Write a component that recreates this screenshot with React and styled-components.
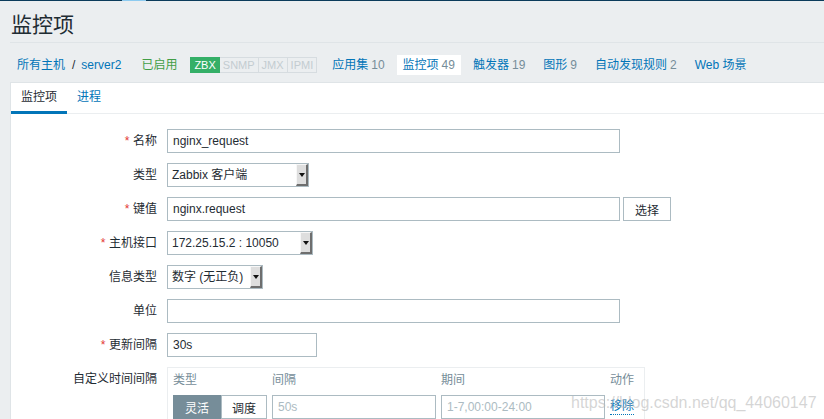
import React from 'react';
import styled, { createGlobalStyle } from 'styled-components';

const GlobalStyle = createGlobalStyle`
  html, body {
    margin: 0;
    padding: 0;
  }
  body {
    background: #ebeef0;
    color: #1f2c33;
    font-family: 'Liberation Sans', Arial, 'Noto Sans CJK SC', sans-serif;
    font-size: 12px;
    overflow: hidden;
  }
`;

const Page = styled.div`
  width: 1100px;
  position: relative;
`;

const TopStrip = styled.div`
  height: 1px;
  background: #0a3b5b;
  padding-left: 122px;
  span {
    display: block;
    width: 24px;
    height: 1px;
    background: #8dcbf0;
  }
`;

const Header = styled.header`
  margin: 0 10px;
  height: 42px;
  box-sizing: border-box;
  border-bottom: 1px solid #dfe4e7;
  display: flex;
  align-items: center;
  padding: 3px 0 0 1px;
  h1 {
    margin: 0;
    font-size: 21px;
    font-weight: normal;
    color: #1f2c33;
  }
`;

const Nav = styled.nav`
  margin: 0 10px;
  height: 39px;
  box-sizing: border-box;
  padding-top: 12px;
  display: flex;
  align-items: flex-start;
  line-height: 20px;
`;

const Crumb = styled.a`
  color: #0275b8;
  text-decoration: none;
  margin-left: ${(p) => p.$ml || 0}px;
`;

const Sep = styled.span`
  margin: 0 6px 0 7px;
  color: #1f2c33;
`;

const Status = styled.span`
  color: #429e47;
  margin-left: 20px;
`;

const Avail = styled.div`
  display: flex;
  margin: 2px 0 0 13px;
`;

const AvailBox = styled.span`
  display: block;
  height: 16px;
  line-height: 14px;
  box-sizing: border-box;
  padding: 0 3px;
  font-size: 11px;
  border: 1px solid ${(p) => (p.$on ? '#34af67' : '#d6dce0')};
  background: ${(p) => (p.$on ? '#34af67' : 'transparent')};
  color: ${(p) => (p.$on ? '#ffffff' : '#c3ccd1')};
  & + & {
    border-left: ${(p) => (p.$on ? '1px solid #34af67' : '0')};
  }
`;

const NavTab = styled.a`
  color: #0275b8;
  text-decoration: none;
  padding: 0 6px;
  margin-left: ${(p) => p.$ml || 0}px;
  margin-right: 6px;
  background: ${(p) => (p.$active ? '#ffffff' : 'transparent')};
  white-space: nowrap;
`;

const Count = styled.span`
  color: #768d99;
  margin-left: 3px;
`;

const Panel = styled.section`
  margin: 0 10px;
  background: #ffffff;
  border: 1px solid #dfe4e7;
  min-height: 400px;
`;

const TabBar = styled.div`
  display: flex;
  border-bottom: 1px solid #ebeef0;
`;

const Tab = styled.a`
  display: block;
  padding: 0 10px;
  line-height: 28px;
  height: 31px;
  box-sizing: border-box;
  margin-bottom: -1px;
  border-bottom: 3px solid ${(p) => (p.$active ? '#0275b8' : 'transparent')};
  color: ${(p) => (p.$active ? '#1f2c33' : '#0275b8')};
  text-decoration: none;
`;

const Form = styled.div`
  padding-top: 10px;
`;

const Row = styled.div`
  display: grid;
  grid-template-columns: 146px 1fr;
  column-gap: 10px;
  padding: 5px 0;
  align-items: start;
`;

const Label = styled.label`
  text-align: right;
  line-height: 24px;
  white-space: nowrap;
`;

const Req = styled.span`
  color: #e33734;
  margin-right: 0.3em;
`;

const Controls = styled.div`
  display: flex;
  align-items: center;
`;

const TextInput = styled.input`
  width: ${(p) => p.$w}px;
  height: 24px;
  box-sizing: border-box;
  border: 1px solid #acbbc2;
  padding: 0 5px;
  font: inherit;
  color: #1f2c33;
  background: #ffffff;
  outline: none;
  &::placeholder {
    color: #acbbc2;
  }
`;

const SelectBox = styled.div`
  width: ${(p) => p.$w}px;
  height: 24px;
  box-sizing: border-box;
  border: 1px solid #acbbc2;
  background: #ffffff;
  display: flex;
  align-items: stretch;
  span {
    flex: 1;
    line-height: 22px;
    padding-left: 4px;
    white-space: nowrap;
  }
`;

const Arrow = styled.i`
  display: flex;
  align-items: center;
  justify-content: center;
  width: 12px;
  box-sizing: border-box;
  background: #dedede;
  border-style: solid;
  border-width: 1px 2px 2px 1px;
  border-color: #f7f7f7 #6e6e6e #6e6e6e #f7f7f7;
  &::after {
    content: '';
    border-left: 3px solid transparent;
    border-right: 3px solid transparent;
    border-top: 4px solid #111111;
    margin-top: 1px;
  }
`;

const Button = styled.button`
  margin-left: 3px;
  height: 24px;
  box-sizing: border-box;
  padding: 0 11px;
  border: 1px solid #acbbc2;
  background: #ffffff;
  font: inherit;
  color: #1f2c33;
`;

const Intervals = styled.div`
  border: 1px solid #ebeef0;
  padding: 3px 10px 0 5px;
  display: grid;
  grid-template-columns: 94px 164px 164px auto;
  column-gap: 5px;
  row-gap: 6px;
  width: max-content;
`;

const ColHead = styled.div`
  color: #768d99;
  line-height: 18px;
`;

const Segmented = styled.div`
  display: flex;
`;

const SegButton = styled.button`
  width: ${(p) => p.$w}px;
  height: 24px;
  box-sizing: border-box;
  font: inherit;
  padding: 0;
  border: 1px solid ${(p) => (p.$active ? '#768d99' : '#acbbc2')};
  background: ${(p) => (p.$active ? '#768d99' : '#ffffff')};
  color: ${(p) => (p.$active ? '#ffffff' : '#1f2c33')};
`;

const RemoveLink = styled.a`
  align-self: center;
  justify-self: start;
  color: #0275b8;
  text-decoration: none;
  border-bottom: 1px dotted #0275b8;
  line-height: 15px;
`;

const Watermark = styled.div`
  position: absolute;
  left: 571px;
  top: 394px;
  font-size: 16px;
  line-height: 18px;
  color: rgba(185, 185, 185, 0.6);
  pointer-events: none;
  white-space: nowrap;
`;

const Select = ({ w, children }) => (
  <SelectBox $w={w}>
    <span>{children}</span>
    <Arrow />
  </SelectBox>
);

const App = () => (
  <Page>
    <GlobalStyle />
    <TopStrip><span /></TopStrip>
    <Header>
      <h1>监控项</h1>
    </Header>
    <Nav>
      <Crumb $ml={7}>所有主机</Crumb>
      <Sep>/</Sep>
      <Crumb>server2</Crumb>
      <Status>已启用</Status>
      <Avail>
        <AvailBox $on>ZBX</AvailBox>
        <AvailBox>SNMP</AvailBox>
        <AvailBox>JMX</AvailBox>
        <AvailBox>IPMI</AvailBox>
      </Avail>
      <NavTab $ml={9}>应用集<Count>10</Count></NavTab>
      <NavTab $active>监控项<Count>49</Count></NavTab>
      <NavTab>触发器<Count>19</Count></NavTab>
      <NavTab>图形<Count>9</Count></NavTab>
      <NavTab>自动发现规则<Count>2</Count></NavTab>
      <NavTab>Web 场景</NavTab>
    </Nav>

    <Panel>
      <TabBar>
        <Tab $active>监控项</Tab>
        <Tab>进程</Tab>
      </TabBar>

      <Form>
        <Row>
          <Label><Req>*</Req>名称</Label>
          <Controls>
            <TextInput $w={453} value="nginx_request" readOnly />
          </Controls>
        </Row>
        <Row>
          <Label>类型</Label>
          <Controls>
            <Select w={142}>Zabbix 客户端</Select>
          </Controls>
        </Row>
        <Row>
          <Label><Req>*</Req>键值</Label>
          <Controls>
            <TextInput $w={453} value="nginx.request" readOnly />
            <Button type="button">选择</Button>
          </Controls>
        </Row>
        <Row>
          <Label><Req>*</Req>主机接口</Label>
          <Controls>
            <Select w={146}>172.25.15.2 : 10050</Select>
          </Controls>
        </Row>
        <Row>
          <Label>信息类型</Label>
          <Controls>
            <Select w={96}>数字 (无正负)</Select>
          </Controls>
        </Row>
        <Row>
          <Label>单位</Label>
          <Controls>
            <TextInput $w={453} value="" readOnly />
          </Controls>
        </Row>
        <Row>
          <Label><Req>*</Req>更新间隔</Label>
          <Controls>
            <TextInput $w={150} value="30s" readOnly />
          </Controls>
        </Row>
        <Row>
          <Label>自定义时间间隔</Label>
          <Intervals>
            <ColHead>类型</ColHead>
            <ColHead>间隔</ColHead>
            <ColHead>期间</ColHead>
            <ColHead>动作</ColHead>
            <Segmented>
              <SegButton type="button" $w={48} $active>灵活</SegButton>
              <SegButton type="button" $w={46}>调度</SegButton>
            </Segmented>
            <TextInput $w={164} placeholder="50s" readOnly />
            <TextInput $w={164} placeholder="1-7,00:00-24:00" readOnly />
            <RemoveLink>移除</RemoveLink>
          </Intervals>
        </Row>
      </Form>
    </Panel>

    <Watermark>https://blog.csdn.net/qq_44060147</Watermark>
  </Page>
);

export default App;
